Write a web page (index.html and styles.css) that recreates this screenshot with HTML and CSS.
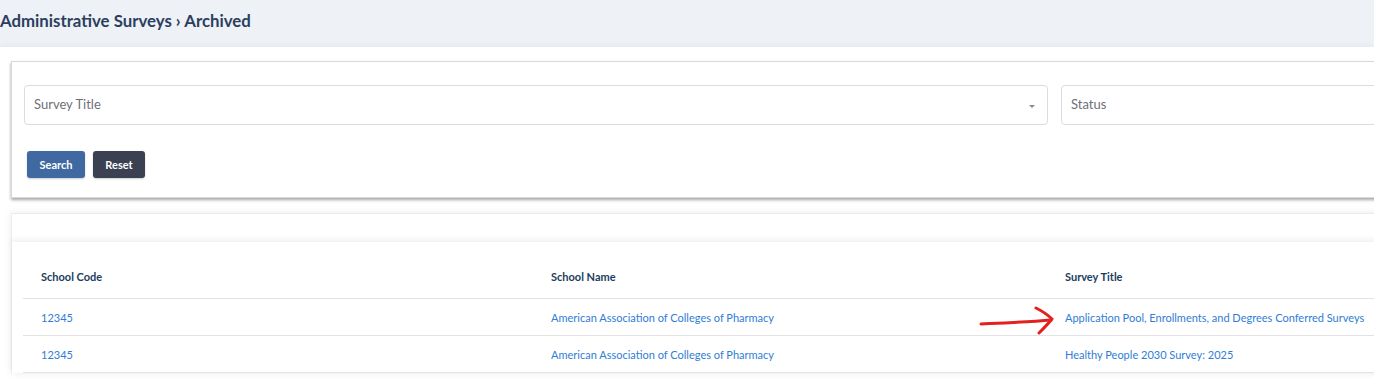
FILE: index.html
```html
<!DOCTYPE html>
<html lang="en">
<head>
  <meta charset="UTF-8">
  <meta name="viewport" content="width=device-width, initial-scale=1.0">
  <title>Administrative Surveys - Archived</title>
  <link rel="stylesheet" href="styles.css">
</head>
<body>
  <header class="page-head">
    <h1>Administrative Surveys › Archived</h1>
  </header>

  <main class="panel">
    <section class="card filters">
      <div class="filter-row">
        <div class="field select">
          <span class="placeholder">Survey Title</span>
          <span class="caret"></span>
        </div>
        <div class="field status">
          <span class="placeholder">Status</span>
        </div>
      </div>
      <div class="actions">
        <button class="btn btn-primary">Search</button>
        <button class="btn btn-dark">Reset</button>
      </div>
    </section>

    <section class="card results">
      <div class="results-top"></div>
      <div class="results-body">
        <table class="grid">
          <thead>
            <tr>
              <th class="c1">School Code</th>
              <th class="c2">School Name</th>
              <th class="c3">Survey Title</th>
              <th></th>
            </tr>
          </thead>
          <tbody>
            <tr>
              <td><a href="#">12345</a></td>
              <td><a href="#">American Association of Colleges of Pharmacy</a></td>
              <td class="marked">
                <!-- annotation arrow -->
                <svg class="arrow" width="80" height="30" viewBox="0 0 80 30">
                  <path d="M2 18 C 24 17, 50 16, 72 14" fill="none" stroke="#e3221f" stroke-width="3" stroke-linecap="round"/>
                  <path d="M57 2 C 63 5, 69 9, 73 13 C 69 18, 64 23, 60 27" fill="none" stroke="#e3221f" stroke-width="3" stroke-linecap="round" stroke-linejoin="round"/>
                </svg>
                <a href="#">Application Pool, Enrollments, and Degrees Conferred Surveys</a>
              </td>
              <td></td>
            </tr>
            <tr>
              <td><a href="#">12345</a></td>
              <td><a href="#">American Association of Colleges of Pharmacy</a></td>
              <td><a href="#">Healthy People 2030 Survey: 2025</a></td>
              <td></td>
            </tr>
          </tbody>
        </table>
      </div>
    </section>
  </main>
</body>
</html>
```

FILE: styles.css
```css
html, body {
  margin: 0;
  padding: 0;
}
body {
  font-family: Lato, 'Open Sans', sans-serif;
  background-color: #eef1f6;
  color: #334155;
  overflow: hidden;
}
.page-head {
  height: 47px;
}
.page-head h1 {
  margin: 0;
  padding-top: 10px;
  font-size: 16.8px;
  font-weight: 700;
  color: #2b3e60;
}
.panel {
  background: #fff;
  padding: 14px 0 0 11px;
  box-shadow: 0 -2px 6px rgba(0, 0, 0, 0.04);
  overflow: hidden;
  min-height: 320px;
}
.card {
  width: 1420px;
  background: #fff;
  border: 1px solid #d9d9d9;
  border-right: none;
}
.filters {
  padding: 23px 0 19px 12px;
  box-shadow: 0 2px 3px rgba(0, 0, 0, 0.35);
}
.filter-row {
  display: flex;
  gap: 13px;
}
.field {
  flex-shrink: 0;
  height: 38px;
  border: 1px solid #dcdcdc;
  border-radius: 4px;
  display: flex;
  align-items: center;
  padding: 0 9px;
  box-sizing: content-box;
}
.field.select {
  width: 1003px;
  padding-right: 10px;
  justify-content: space-between;
}
.field.status {
  width: 340px;
}
.placeholder {
  font-size: 13px;
  color: #6f6f78;
  margin-top: -3px;
}
.caret {
  width: 0;
  height: 0;
  border-left: 3.5px solid transparent;
  border-right: 3.5px solid transparent;
  border-top: 3.5px solid #8a8a8a;
  margin-right: 2px;
  margin-top: 2px;
}
.actions {
  display: flex;
  gap: 8px;
  margin: 26px 0 0 3px;
}
.btn {
  font-family: inherit;
  font-size: 11px;
  font-weight: 700;
  color: #fff;
  border: none;
  border-radius: 3px;
  height: 27px;
  padding: 0 12px;
  cursor: pointer;
  box-shadow: 0 1px 2px rgba(0, 0, 0, 0.2);
}
.btn-primary {
  background-color: #4169a1;
  width: 58px;
}
.btn-dark {
  background-color: #3b4152;
  width: 52px;
}
.results {
  margin-top: 15px;
  border-bottom: none;
  border-color: #ececec;
  box-shadow: 0 0 8px rgba(0, 0, 0, 0.08);
}
.results-top {
  height: 28px;
}
.results-body {
  padding: 0 0 0 11px;
  box-shadow: 0 -3px 5px rgba(0, 0, 0, 0.06);
}
.grid {
  border-collapse: collapse;
  width: 1409px;
  table-layout: fixed;
}
.grid th, .grid td {
  text-align: left;
  padding: 0 18px;
  font-size: 11px;
  border-bottom: 1px solid #e2e2e2;
}
.grid th {
  height: 43px;
  padding-top: 13px;
  font-weight: 700;
  color: #1c3d5e;
}
.grid td {
  height: 36px;
}
.grid .c1 { width: 474px; }
.grid .c2 { width: 478px; }
.grid .c3 { width: 330px; }
.grid a {
  color: #2f7dd6;
  text-decoration: none;
}
.marked {
  position: relative;
}
.arrow {
  position: absolute;
  left: -68px;
  top: 7px;
}
```
